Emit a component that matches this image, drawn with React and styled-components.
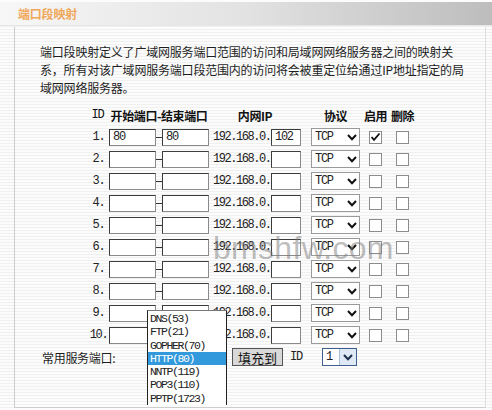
import React from "react";
import styled, { createGlobalStyle } from "styled-components";

const CJK = `"Noto Sans CJK SC", "Noto Sans", sans-serif`;
const MONO = `"Liberation Mono", "DejaVu Sans Mono", monospace`;

const GlobalStyle = createGlobalStyle`
  html, body {
    margin: 0;
    padding: 0;
    overflow: hidden;
  }
  body {
    font-family: ${CJK};
    color: #222;
    background: repeating-linear-gradient(
      to bottom,
      #fcfcfc 0px,
      #fcfcfc 2px,
      #f0f0f0 2px,
      #f0f0f0 3px
    );
  }
`;

const Page = styled.div`
  width: 492px;
  height: 410px;
  padding-top: 2px;
  box-sizing: border-box;
`;

const TitleBar = styled.div`
  height: 23px;
  display: flex;
  align-items: center;
  padding-left: 18px;
  background: linear-gradient(to right, #f7f7f7 0%, #e2e2e2 50%, #bdbdbd 100%);
  border-bottom: 1px solid #e6e6e6;
`;

const Title = styled.span`
  font-size: 12px;
  font-weight: 700;
  color: #f0a85a;
  letter-spacing: -0.2px;
`;

const Panel = styled.div`
  position: relative;
  margin: 1px 0 0 14px;
  width: 472px;
  height: 381px;
  box-sizing: border-box;
  border-left: 1px solid #cdcdcd;
  border-right: 1px solid #dedede;
  border-bottom: 1px solid #cdcdcd;
`;

const Intro = styled.div`
  padding: 16px 0 0 25px;
  font-size: 12px;
  line-height: 18px;
  color: #1e1e1e;
  letter-spacing: -0.2px;
`;

const IntroLine = styled.div`
  white-space: nowrap;
`;

const PortGrid = styled.div`
  margin: 7px 0 0 71px;
  display: grid;
  grid-template-columns: 23px 47px 6px 47px 62px 30px 59px 22px 27px;
  grid-auto-rows: 22px;
  align-items: center;
`;

const HeadCell = styled.div`
  grid-column: ${(p) => p.$col};
  justify-self: ${(p) => p.$justify || "center"};
  width: ${(p) => (p.$width ? `${p.$width}px` : "auto")};
  display: flex;
  justify-content: center;
  white-space: nowrap;
  font-size: 12px;
  font-weight: ${(p) => (p.$plain ? 400 : 700)};
  font-family: ${(p) => (p.$plain ? MONO : CJK)};
  letter-spacing: ${(p) => (p.$plain ? "-1.3px" : "-0.4px")};
  color: #111;
`;

const RowNum = styled.div`
  justify-self: center;
  font-family: ${MONO};
  font-size: 12px;
  letter-spacing: -1.3px;
  color: #222;
  padding-left: 2px;
`;

const TextBox = styled.div`
  height: 17px;
  box-sizing: border-box;
  border: 1px solid #3c3c3c;
  border-right-color: #8a8a8a;
  border-bottom-color: #8a8a8a;
  background: #fff;
  font-family: ${MONO};
  font-size: 12px;
  letter-spacing: -1.3px;
  line-height: 15px;
  padding-left: 3px;
  color: #222;
`;

const Dash = styled.div`
  height: 1px;
  background: #333;
`;

const IpPrefix = styled.div`
  padding-left: 4px;
  font-family: ${MONO};
  font-size: 12px;
  letter-spacing: -1.45px;
  color: #222;
  white-space: nowrap;
`;

const DropBox = styled.div`
  justify-self: ${(p) => (p.$end ? "end" : "start")};
  width: ${(p) => p.$width}px;
  height: ${(p) => p.$height}px;
  box-sizing: border-box;
  display: flex;
  align-items: center;
  justify-content: space-between;
  border: 1px solid ${(p) => p.$border};
  background: #fff;
  font-family: ${MONO};
  font-size: 12px;
  letter-spacing: -1.3px;
  color: #222;
  padding-left: 3px;
`;

const ArrowSlot = styled.span`
  display: flex;
  align-items: center;
  justify-content: center;
  align-self: stretch;
  width: ${(p) => p.$width}px;
  background: ${(p) => p.$bg || "transparent"};
  border-left: ${(p) => (p.$bg ? "1px solid #a9bdd6" : "none")};
`;

const Check = styled.span`
  justify-self: end;
  width: 13px;
  height: 13px;
  box-sizing: border-box;
  border: 1px solid #8c8c8c;
  background: #fff;
  display: flex;
  align-items: center;
  justify-content: center;
`;

const ServiceRow = styled.div`
  display: flex;
  align-items: center;
  height: 22px;
  padding-left: 27px;
`;

const ServiceLabel = styled.span`
  width: 105px;
  font-size: 12px;
  letter-spacing: -0.3px;
  color: #1e1e1e;
  white-space: nowrap;
`;

const PickerAnchor = styled.div`
  position: relative;
  width: 80px;
  height: 22px;
`;

const OptionList = styled.ul`
  position: absolute;
  z-index: 3;
  top: -36px;
  left: 0;
  width: 80px;
  margin: 0;
  padding: 1px 0 0;
  list-style: none;
  box-sizing: border-box;
  background: #fff;
  border: 1px solid #222;
  border-top-color: #777;
  border-bottom: none;
`;

const OptionItem = styled.li`
  height: 13.3px;
  line-height: 13.3px;
  padding-left: 2px;
  font-family: ${MONO};
  font-size: 11.5px;
  letter-spacing: -1.4px;
  color: ${(p) => (p.$active ? "#fff" : "#222")};
  background: ${(p) => (p.$active ? "#3399dd" : "transparent")};
  white-space: nowrap;
`;

const FillButton = styled.button`
  margin-left: 5px;
  width: 51px;
  height: 18px;
  padding: 0;
  box-sizing: border-box;
  border: 1px solid #555;
  background: #d8d8d8;
  font-family: ${CJK};
  font-size: 13px;
  line-height: 15px;
  color: #111;
`;

const IdLabel = styled.span`
  width: 32px;
  margin-left: 7px;
  font-family: ${MONO};
  font-size: 12px;
  letter-spacing: -1.3px;
  color: #222;
`;

const Watermark = styled.div`
  position: absolute;
  z-index: 2;
  left: 198px;
  top: 203px;
  font-family: "Liberation Sans", Arial, sans-serif;
  font-size: 32px;
  color: rgba(125, 125, 125, 0.5);
  letter-spacing: 0.3px;
  pointer-events: none;
`;

const Chevron = ({ color = "#111" }) => (
  <svg width="10" height="7" viewBox="0 0 10 7">
    <polyline
      points="1,1 5,5.2 9,1"
      fill="none"
      stroke={color}
      strokeWidth="2"
    />
  </svg>
);

const Tick = () => (
  <svg width="11" height="10" viewBox="0 0 11 10">
    <polyline
      points="1.5,5 4,7.8 9.5,1.5"
      fill="none"
      stroke="#111"
      strokeWidth="1.8"
    />
  </svg>
);

const rules = Array.from({ length: 10 }, (_, i) => ({
  id: i + 1,
  start: i === 0 ? "80" : "",
  end: i === 0 ? "80" : "",
  host: i === 0 ? "102" : "",
  enabled: i === 0,
}));

const services = [
  "DNS(53)",
  "FTP(21)",
  "GOPHER(70)",
  "HTTP(80)",
  "NNTP(119)",
  "POP3(110)",
  "PPTP(1723)",
];

export default function App() {
  return (
    <>
      <GlobalStyle />
      <Page>
        <TitleBar>
          <Title>端口段映射</Title>
        </TitleBar>
        <Panel>
          <Intro>
            <IntroLine>端口段映射定义了广域网服务端口范围的访问和局域网网络服务器之间的映射关</IntroLine>
            <IntroLine>系，所有对该广域网服务端口段范围内的访问将会被重定位给通过IP地址指定的局</IntroLine>
            <IntroLine>域网网络服务器。</IntroLine>
          </Intro>

          <PortGrid>
            <HeadCell $col="1" $plain>ID</HeadCell>
            <HeadCell $col="2 / 5">开始端口-结束端口</HeadCell>
            <HeadCell $col="5 / 7">内网IP</HeadCell>
            <HeadCell $col="7" $justify="end" $width={49}>协议</HeadCell>
            <HeadCell $col="8" $justify="end" $width={13}>启用</HeadCell>
            <HeadCell $col="9" $justify="end" $width={13}>删除</HeadCell>

            {rules.map((r) => (
              <React.Fragment key={r.id}>
                <RowNum>{r.id}.</RowNum>
                <TextBox>{r.start}</TextBox>
                <Dash />
                <TextBox>{r.end}</TextBox>
                <IpPrefix>192.168.0.</IpPrefix>
                <TextBox>{r.host}</TextBox>
                <DropBox $end $width={49} $height={18} $border="#9a9a9a">
                  TCP
                  <ArrowSlot $width={14}>
                    <Chevron />
                  </ArrowSlot>
                </DropBox>
                <Check>{r.enabled && <Tick />}</Check>
                <Check />
              </React.Fragment>
            ))}
          </PortGrid>

          <ServiceRow>
            <ServiceLabel>常用服务端口:</ServiceLabel>
            <PickerAnchor>
              <OptionList>
                {services.map((s) => (
                  <OptionItem key={s} $active={s === "HTTP(80)"}>
                    {s}
                  </OptionItem>
                ))}
              </OptionList>
            </PickerAnchor>
            <FillButton>填充到</FillButton>
            <IdLabel>ID</IdLabel>
            <DropBox $width={35} $height={18} $border="#3e5f8f">
              1
              <ArrowSlot $width={16} $bg="#dfe9f5">
                <Chevron color="#1d2f4a" />
              </ArrowSlot>
            </DropBox>
          </ServiceRow>

          <Watermark>bmshfw.com</Watermark>
        </Panel>
      </Page>
    </>
  );
}
